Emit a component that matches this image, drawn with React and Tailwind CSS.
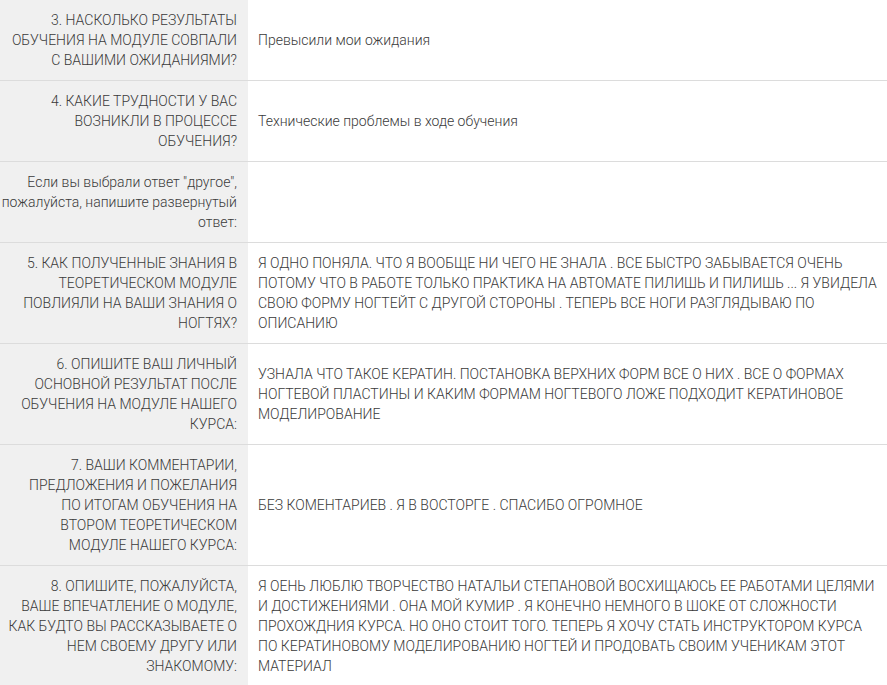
import React from "react";

const rows = [
  {
    q: ["3. НАСКОЛЬКО РЕЗУЛЬТАТЫ", "ОБУЧЕНИЯ НА МОДУЛЕ СОВПАЛИ", "С ВАШИМИ ОЖИДАНИЯМИ?"],
    a: ["Превысили мои ожидания"],
  },
  {
    q: ["4. КАКИЕ ТРУДНОСТИ У ВАС", "ВОЗНИКЛИ В ПРОЦЕССЕ", "ОБУЧЕНИЯ?"],
    a: ["Технические проблемы в ходе обучения"],
  },
  {
    q: ["Если вы выбрали ответ \"другое\",", "пожалуйста, напишите развернутый", "ответ:"],
    a: [],
  },
  {
    q: ["5. КАК ПОЛУЧЕННЫЕ ЗНАНИЯ В", "ТЕОРЕТИЧЕСКОМ МОДУЛЕ", "ПОВЛИЯЛИ НА ВАШИ ЗНАНИЯ О", "НОГТЯХ?"],
    a: [
      "Я ОДНО ПОНЯЛА. ЧТО Я ВООБЩЕ НИ ЧЕГО НЕ ЗНАЛА . ВСЕ БЫСТРО ЗАБЫВАЕТСЯ ОЧЕНЬ",
      "ПОТОМУ ЧТО В РАБОТЕ ТОЛЬКО ПРАКТИКА НА АВТОМАТЕ ПИЛИШЬ И ПИЛИШЬ ... Я УВИДЕЛА",
      "СВОЮ ФОРМУ НОГТЕЙТ С ДРУГОЙ СТОРОНЫ . ТЕПЕРЬ ВСЕ НОГИ РАЗГЛЯДЫВАЮ ПО",
      "ОПИСАНИЮ",
    ],
  },
  {
    q: ["6. ОПИШИТЕ ВАШ ЛИЧНЫЙ", "ОСНОВНОЙ РЕЗУЛЬТАТ ПОСЛЕ", "ОБУЧЕНИЯ НА МОДУЛЕ НАШЕГО", "КУРСА:"],
    a: [
      "УЗНАЛА ЧТО ТАКОЕ КЕРАТИН. ПОСТАНОВКА ВЕРХНИХ ФОРМ ВСЕ О НИХ . ВСЕ О ФОРМАХ",
      "НОГТЕВОЙ ПЛАСТИНЫ И КАКИМ ФОРМАМ НОГТЕВОГО ЛОЖЕ ПОДХОДИТ КЕРАТИНОВОЕ",
      "МОДЕЛИРОВАНИЕ",
    ],
  },
  {
    q: ["7. ВАШИ КОММЕНТАРИИ,", "ПРЕДЛОЖЕНИЯ И ПОЖЕЛАНИЯ", "ПО ИТОГАМ ОБУЧЕНИЯ НА", "ВТОРОМ ТЕОРЕТИЧЕСКОМ", "МОДУЛЕ НАШЕГО КУРСА:"],
    a: ["БЕЗ КОМЕНТАРИЕВ . Я В ВОСТОРГЕ . СПАСИБО ОГРОМНОЕ"],
  },
  {
    q: ["8. ОПИШИТЕ, ПОЖАЛУЙСТА,", "ВАШЕ ВПЕЧАТЛЕНИЕ О МОДУЛЕ,", "КАК БУДТО ВЫ РАССКАЗЫВАЕТЕ О", "НЕМ СВОЕМУ ДРУГУ ИЛИ", "ЗНАКОМОМУ:"],
    a: [
      "Я ОЕНЬ ЛЮБЛЮ ТВОРЧЕСТВО НАТАЛЬИ СТЕПАНОВОЙ ВОСХИЩАЮСЬ ЕЕ РАБОТАМИ ЦЕЛЯМИ",
      "И ДОСТИЖЕНИЯМИ . ОНА МОЙ КУМИР . Я КОНЕЧНО НЕМНОГО В ШОКЕ ОТ СЛОЖНОСТИ",
      "ПРОХОЖДНИЯ КУРСА. НО ОНО СТОИТ ТОГО. ТЕПЕРЬ Я ХОЧУ СТАТЬ ИНСТРУКТОРОМ КУРСА",
      "ПО КЕРАТИНОВОМУ МОДЕЛИРОВАНИЮ НОГТЕЙ И ПРОДОВАТЬ СВОИМ УЧЕНИКАМ ЭТОТ",
      "МАТЕРИАЛ",
    ],
  },
];

export default function App() {
  return (
    <div
      className="w-[887px] h-[685px] overflow-hidden bg-white text-[14px] leading-[20px] font-light text-[#3a3a3a]"
      style={{ fontFamily: "Roboto, 'Liberation Sans', sans-serif" }}
    >
      {rows.map((r, i) => (
        <div key={i} className="flex border-b border-[#dcdcdc]">
          <div className="w-[248px] shrink-0 bg-[#f0f0f0] py-[10px] pr-[11px] text-right whitespace-nowrap">
            {r.q.map((l, j) => (
              <div key={j}>{l}</div>
            ))}
          </div>
          <div className="flex-1 flex flex-col justify-center py-[10px] pl-[10px] whitespace-nowrap">
            {r.a.map((l, j) => (
              <div key={j}>{l}</div>
            ))}
          </div>
        </div>
      ))}
    </div>
  );
}
